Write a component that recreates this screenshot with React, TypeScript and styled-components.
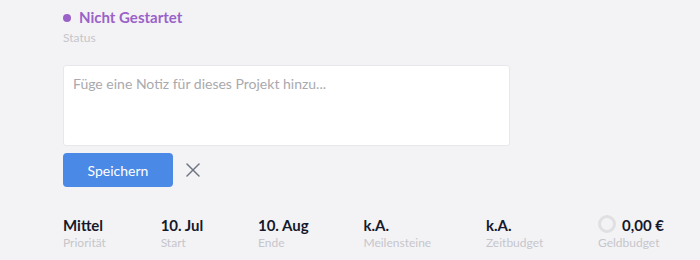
import styled, { createGlobalStyle } from 'styled-components';
import { X } from 'lucide-react';

const GlobalStyle = createGlobalStyle`
  html, body {
    margin: 0;
    padding: 0;
    background: #f3f3f6;
    font-family: 'Lato', 'Liberation Sans', sans-serif;
  }
`;

const Page = styled.div`
  width: 700px;
  height: 260px;
  box-sizing: border-box;
  padding: 8px 36px 0 63px;
  display: flex;
  flex-direction: column;
  background: #f3f3f6;
`;

const StatusRow = styled.div`
  display: flex;
  align-items: center;
  gap: 8px;
`;

const Dot = styled.span<{ color: string }>`
  width: 8px;
  height: 8px;
  border-radius: 50%;
  background: ${({ color }) => color};
`;

const StatusText = styled.span`
  font-size: 15px;
  font-weight: 700;
  color: #9a62c8;
  line-height: 19px;
`;

const Caption = styled.div`
  font-size: 12px;
  color: #c6c6ca;
  line-height: 16px;
`;

const StatusCaption = styled(Caption)`
  margin-top: 3px;
`;

const NoteArea = styled.textarea`
  margin-top: 19px;
  width: 447px;
  height: 81px;
  box-sizing: border-box;
  resize: none;
  border: 1px solid #e8e8ec;
  border-radius: 3px;
  background: #fff;
  padding: 9px 9px;
  font-family: inherit;
  font-size: 14px;
  color: #333;
  outline: none;

  &::placeholder {
    color: #a9a9ae;
  }
`;

const Actions = styled.div`
  display: flex;
  align-items: center;
  gap: 8px;
  margin-top: 7px;
`;

const SaveButton = styled.button`
  width: 110px;
  height: 34px;
  border: none;
  border-radius: 4px;
  background: #4a89e6;
  color: #fff;
  font-family: inherit;
  font-size: 14px;
  cursor: pointer;
`;

const CloseButton = styled.button`
  border: none;
  background: none;
  padding: 0;
  color: #6e7480;
  display: flex;
  cursor: pointer;
`;

const Stats = styled.div`
  margin-top: 29px;
  display: flex;
  justify-content: space-between;
`;

const Stat = styled.div`
  display: flex;
  flex-direction: column;
`;

const ValueRow = styled.div`
  display: flex;
  align-items: center;
  gap: 6px;
`;

const Value = styled.div`
  font-size: 15px;
  font-weight: 700;
  color: #16192b;
  line-height: 19px;
`;

const Ring = styled.span`
  width: 18px;
  height: 18px;
  box-sizing: border-box;
  border-radius: 50%;
  border: 3px solid #e0e0e3;
  margin-top: -4px;
`;

const stats = [
  { value: '10. Jul', label: 'Start' },
  { value: '10. Aug', label: 'Ende' },
  { value: 'k.A.', label: 'Meilensteine' },
  { value: 'k.A.', label: 'Zeitbudget' },
];

export default function App() {
  return (
    <>
      <GlobalStyle />
      <Page>
        <StatusRow>
          <Dot color="#9a62c8" />
          <StatusText>Nicht Gestartet</StatusText>
        </StatusRow>
        <StatusCaption>Status</StatusCaption>

        <NoteArea placeholder="Füge eine Notiz für dieses Projekt hinzu..." />
        <Actions>
          <SaveButton>Speichern</SaveButton>
          <CloseButton>
            <X size={24} strokeWidth={1.5} />
          </CloseButton>
        </Actions>

        <Stats>
          <Stat>
            <Value>Mittel</Value>
            <Caption>Priorität</Caption>
          </Stat>
          {stats.map((s) => (
            <Stat key={s.label}>
              <Value>{s.value}</Value>
              <Caption>{s.label}</Caption>
            </Stat>
          ))}
          <Stat>
            <ValueRow>
              <Ring />
              <Value>0,00 €</Value>
            </ValueRow>
            <Caption>Geldbudget</Caption>
          </Stat>
        </Stats>
      </Page>
    </>
  );
}
